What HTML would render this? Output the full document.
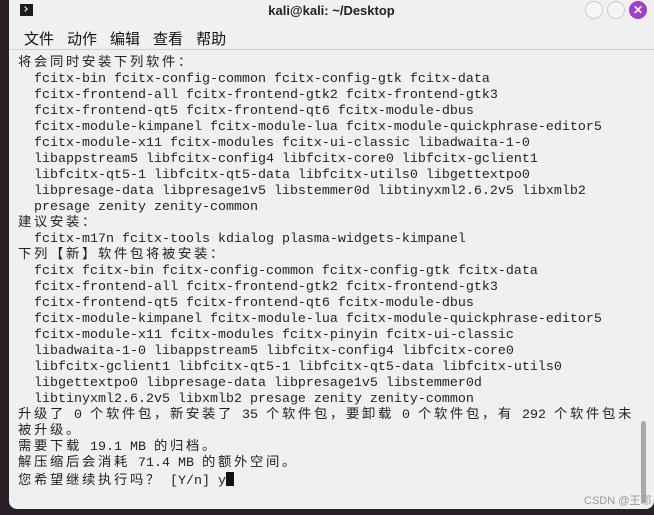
<!DOCTYPE html>
<html><head><meta charset="utf-8"><style>
body{margin:0;width:654px;height:515px;overflow:hidden;background:#2a1f28;position:relative;}
.win{position:absolute;left:9px;top:0;width:645px;height:509px;background:#f1f0f1;border-radius:0 0 8px 8px;overflow:hidden;}
.title{position:absolute;left:0;top:0;width:645px;height:22px;text-align:center;font:bold 13px "Liberation Sans","DejaVu Sans",sans-serif;line-height:21px;color:#222;}
.icon{position:absolute;left:11px;top:4px;width:13px;height:12px;background:#1c1c1c;}
.icon:after{content:"";position:absolute;left:3px;top:3px;width:3px;height:3px;border-right:1px solid #fff;border-bottom:1px solid #fff;transform:rotate(-45deg);}
.btn{position:absolute;top:1px;width:16px;height:16px;border-radius:50%;border:1px solid #ccc;background:#f6f6f6;}
.menu{position:absolute;left:15px;top:28px;font:15px "Liberation Sans","Noto Sans CJK SC",sans-serif;color:#111;}
.menu span{margin-right:13px}
.hr{position:absolute;left:0;top:49px;width:645px;height:1px;background:#d0d0d0;}
.t{position:absolute;left:9px;top:56px;font:13.33px "Liberation Mono","Noto Sans CJK SC",monospace;color:#222;}
.t div{height:16px;line-height:16px;white-space:pre;overflow:visible;}
.w{letter-spacing:2.67px;font-family:"Noto Sans CJK SC",sans-serif;line-height:0;}
.cur{display:inline-block;width:8px;height:14px;background:#111;vertical-align:-2px}
.sb{position:absolute;left:632px;top:421px;width:5px;height:82px;border-radius:3px;background:#aaa;}
.wm{position:absolute;left:575px;top:492px;font:11px "Liberation Sans","Noto Sans CJK SC",sans-serif;color:#999;}
</style></head><body>
<div class="win">
<div class="title">kali@kali: ~/Desktop</div>
<div class="icon"></div>
<div class="btn" style="left:576px"></div>
<div class="btn" style="left:598px"></div>
<div class="btn" style="left:620px;background:#a23fc9;border-color:#a23fc9;color:#fff;font:bold 12px sans-serif;text-align:center;line-height:16px">✕</div>
<div class="menu"><span>文件</span><span>动作</span><span>编辑</span><span>查看</span><span>帮助</span></div>
<div class="hr"></div>
<div class="t">
<div><span class="w">将会同时安装下列软件：</span></div>
<div>  fcitx-bin fcitx-config-common fcitx-config-gtk fcitx-data</div>
<div>  fcitx-frontend-all fcitx-frontend-gtk2 fcitx-frontend-gtk3</div>
<div>  fcitx-frontend-qt5 fcitx-frontend-qt6 fcitx-module-dbus</div>
<div>  fcitx-module-kimpanel fcitx-module-lua fcitx-module-quickphrase-editor5</div>
<div>  fcitx-module-x11 fcitx-modules fcitx-ui-classic libadwaita-1-0</div>
<div>  libappstream5 libfcitx-config4 libfcitx-core0 libfcitx-gclient1</div>
<div>  libfcitx-qt5-1 libfcitx-qt5-data libfcitx-utils0 libgettextpo0</div>
<div>  libpresage-data libpresage1v5 libstemmer0d libtinyxml2.6.2v5 libxmlb2</div>
<div>  presage zenity zenity-common</div>
<div><span class="w">建议安装：</span></div>
<div>  fcitx-m17n fcitx-tools kdialog plasma-widgets-kimpanel</div>
<div><span class="w">下列【新】软件包将被安装：</span></div>
<div>  fcitx fcitx-bin fcitx-config-common fcitx-config-gtk fcitx-data</div>
<div>  fcitx-frontend-all fcitx-frontend-gtk2 fcitx-frontend-gtk3</div>
<div>  fcitx-frontend-qt5 fcitx-frontend-qt6 fcitx-module-dbus</div>
<div>  fcitx-module-kimpanel fcitx-module-lua fcitx-module-quickphrase-editor5</div>
<div>  fcitx-module-x11 fcitx-modules fcitx-pinyin fcitx-ui-classic</div>
<div>  libadwaita-1-0 libappstream5 libfcitx-config4 libfcitx-core0</div>
<div>  libfcitx-gclient1 libfcitx-qt5-1 libfcitx-qt5-data libfcitx-utils0</div>
<div>  libgettextpo0 libpresage-data libpresage1v5 libstemmer0d</div>
<div>  libtinyxml2.6.2v5 libxmlb2 presage zenity zenity-common</div>
<div><span class="w">升级了</span> 0 <span class="w">个软件包，新安装了</span> 35 <span class="w">个软件包，要卸载</span> 0 <span class="w">个软件包，有</span> 292 <span class="w">个软件包未</span></div>
<div><span class="w">被升级。</span></div>
<div><span class="w">需要下载</span> 19.1 MB <span class="w">的归档。</span></div>
<div><span class="w">解压缩后会消耗</span> 71.4 MB <span class="w">的额外空间。</span></div>
<div><span class="w">您希望继续执行吗？</span> [Y/n] y<span class="cur"></span></div>
</div>
<div class="sb"></div>
<div class="wm">CSDN @王耶</div>
</div>
</body></html>
